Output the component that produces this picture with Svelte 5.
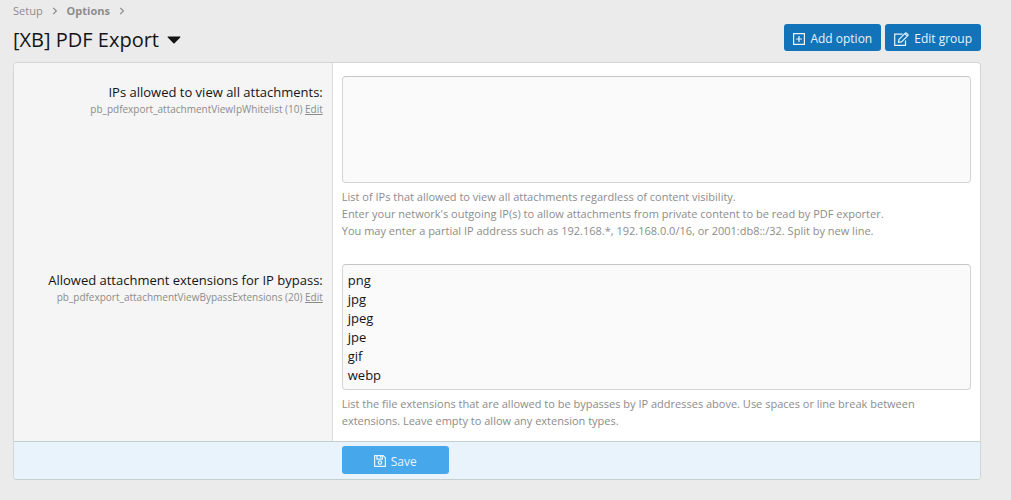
<script>
  let ips = $state('');
  let extensions = $state('png\njpg\njpeg\njpe\ngif\nwebp');
</script>

<main>
  <nav aria-label="Breadcrumb">
    <a href="#setup">Setup</a>
    <svg viewBox="0 0 6 8" width="6" height="8"><path d="M1.2.8 4.4 4 1.2 7.2" /></svg>
    <a class="current" href="#options">Options</a>
    <svg viewBox="0 0 6 8" width="6" height="8"><path d="M1.2.8 4.4 4 1.2 7.2" /></svg>
  </nav>

  <header>
    <h1>
      <button class="title" type="button">
        [XB] PDF Export
        <svg viewBox="0 0 14 8" width="14" height="8"><path d="M1.2.5h11.6c.6 0 .8.6.4 1L7.6 7.2a.8.8 0 0 1-1.2 0L.8 1.5C.4 1.1.6.5 1.2.5Z" /></svg>
      </button>
    </h1>
    <div class="actions">
      <a class="button" href="#add">
        <svg viewBox="0 0 12 12" width="12" height="12"><path d="M.6.6h10.800v10.800H.6ZM6 3v6M3 6h6" /></svg>
        Add option
      </a>
      <a class="button" href="#edit-group">
        <svg viewBox="0 0 15 14" width="15" height="14"><path d="M8.500 2.100H.7v11.200h10.800V8.500M10.800 1.700l2.500 2.500M5 7.400 11.300 1.100q.6-.6 1.200 0l1.300 1.300q.6.6 0 1.200L7.500 9.900l-3 .4Z" /></svg>
        Edit group
      </a>
    </div>
  </header>

  <form onsubmit={(e) => e.preventDefault()}>
    <div class="row">
      <div class="term">
        <label for="ips">IPs allowed to view all attachments:</label>
        <div class="hint">pb_pdfexport_attachmentViewIpWhitelist (10) <a href="#edit-ips">Edit</a></div>
      </div>
      <div class="field">
        <textarea id="ips" rows="5" bind:value={ips}></textarea>
        <p>
          List of IPs that allowed to view all attachments regardless of content visibility.<br />
          Enter your network's outgoing IP(s) to allow attachments from private content to be read by PDF exporter.<br />
          You may enter a partial IP address such as 192.168.*, 192.168.0.0/16, or 2001:db8::/32. Split by new line.
        </p>
      </div>
    </div>
    <div class="row">
      <div class="term">
        <label for="extensions">Allowed attachment extensions for IP bypass:</label>
        <div class="hint">pb_pdfexport_attachmentViewBypassExtensions (20) <a href="#edit-extensions">Edit</a></div>
      </div>
      <div class="field">
        <textarea id="extensions" rows="6" bind:value={extensions}></textarea>
        <p>
          List the file extensions that are allowed to be bypasses by IP addresses above. Use spaces or line break between
          extensions. Leave empty to allow any extension types.
        </p>
      </div>
    </div>
    <div class="submit">
      <button class="button save" type="submit">
        <svg viewBox="0 0 12 12" width="12" height="12"><path d="M.6.6h8.600l2.200 2.200v8.600H.6ZM2.900.8v3.400h5.400V.8M6.600 1v1.800" /><circle cx="6" cy="7.600" r="1.700" /></svg>
        Save
      </button>
    </div>
  </form>
</main>

<style>
  :global(body) {
    margin: 0;
    background: #ebebeb;
  }
  main {
    padding: 3px 30px 20px 13px;
    font-family: 'Segoe UI', 'Open Sans', 'Noto Sans', sans-serif;
    font-size: 13px;
    line-height: 19px;
    color: #141414;
  }
  svg {
    flex: none;
    fill: none;
    stroke: currentColor;
    stroke-width: 1.2;
  }
  nav {
    display: flex;
    align-items: center;
    gap: 9px;
    font-size: 11px;
    line-height: 16px;
    color: #8c8c8c;
  }
  nav a {
    color: inherit;
    text-decoration: none;
  }
  .current {
    font-weight: 700;
  }
  header {
    display: flex;
    align-items: center;
    justify-content: space-between;
    padding: 5px 0 11px;
  }
  h1 {
    margin: 0;
    padding-top: 5px;
    font-size: 20px;
    font-weight: 400;
    line-height: 22px;
  }
  .title {
    display: flex;
    align-items: center;
    gap: 8px;
    padding: 0;
    border: 0;
    background: none;
    font: inherit;
    color: inherit;
  }
  .title svg {
    fill: currentColor;
    stroke: none;
  }
  .actions {
    display: flex;
    gap: 4px;
  }
  .button {
    display: flex;
    align-items: center;
    justify-content: center;
    gap: 5px;
    box-sizing: border-box;
    height: 27px;
    padding: 2px 9px 0;
    border: 0;
    border-radius: 3px;
    background: #1373b8;
    color: #e6f5ff;
    font-family: inherit;
    font-size: 12px;
    text-decoration: none;
  }
  form {
    border: 1px solid #d4d6d6;
    border-bottom-color: #c6cfcf;
    border-radius: 4px;
    background: #fff;
    overflow: hidden;
  }
  .row {
    display: grid;
    grid-template-columns: 33% 1fr;
  }
  .term {
    padding: 20px 9px 12px;
    border-right: 1px solid #dedede;
    background: #f5f5f5;
    text-align: right;
  }
  .hint {
    font-size: 10px;
    line-height: 15px;
    color: #8c8c8c;
  }
  .hint a {
    color: inherit;
  }
  .field {
    padding: 13px 9px 12px;
  }
  textarea {
    display: block;
    box-sizing: border-box;
    width: 100%;
    padding: 6px 5px 4px;
    border: 1px solid #d4d4d4;
    border-top-color: #c6c6c6;
    border-radius: 4px;
    background: #fafafa;
    color: inherit;
    font: inherit;
    resize: none;
  }
  p {
    margin: 5px 0 0;
    font-size: 11px;
    line-height: 17px;
    color: #8c8c8c;
  }
  .submit {
    padding: 4px 9px 5px calc(33% + 9px);
    border-top: 1px solid #c6cfcf;
    background: #e8f3fc;
  }
  .save {
    min-width: 107px;
    height: 28px;
    background: #47a7eb;
  }
</style>
